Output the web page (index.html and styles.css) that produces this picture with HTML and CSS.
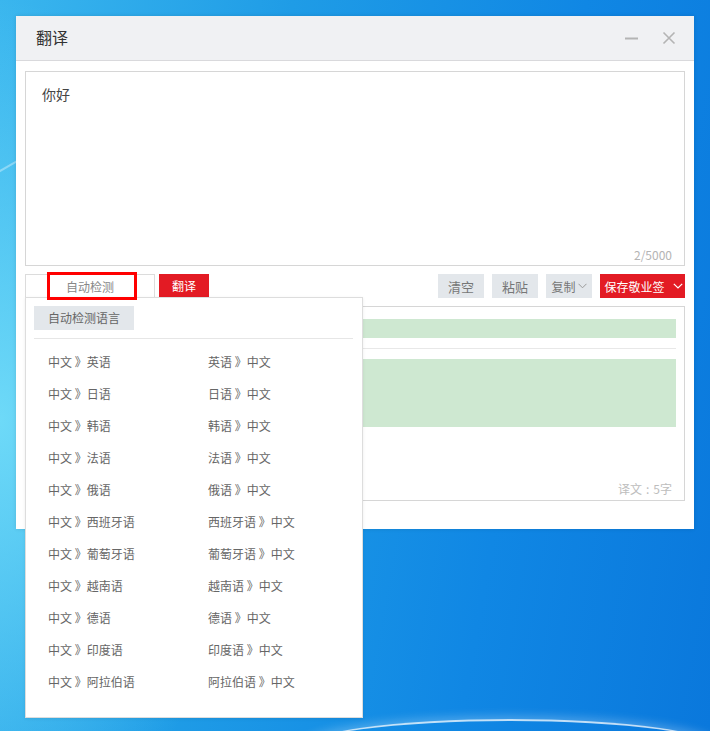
FILE: index.html
```html
<!DOCTYPE html>
<html lang="zh-CN">
<head>
<meta charset="utf-8">
<title>翻译</title>
<link rel="stylesheet" href="styles.css">
</head>
<body>
<div class="desktop">
  <div class="glow"></div>
  <div class="streak"></div>
  <div class="window">
    <div class="titlebar">
      <span class="title">翻译</span>
      <div class="controls">
        <svg class="ctl" width="14" height="14" viewBox="0 0 14 14"><path d="M1 7.5h13" stroke="#b4b4b4" stroke-width="2"/></svg>
        <svg class="ctl" width="14" height="14" viewBox="0 0 14 14"><path d="M1.5 1.5l11 11M12.5 1.5l-11 11" stroke="#b4b4b4" stroke-width="1.6"/></svg>
      </div>
    </div>
    <div class="content">
      <div class="source">
        <div class="source-text">你好</div>
        <div class="counter">2/5000</div>
      </div>
      <div class="toolbar">
        <div class="left-tools">
          <div class="lang-select">自动检测</div>
          <button class="btn btn-red btn-translate">翻译</button>
        </div>
        <div class="right-tools">
          <button class="btn btn-gray">清空</button>
          <button class="btn btn-gray">粘贴</button>
          <button class="btn btn-gray btn-copy">复制<svg width="9" height="6" viewBox="0 0 9 6"><path d="M0.5 0.8l4 4 4-4" fill="none" stroke="#999" stroke-width="1"/></svg></button>
          <button class="btn btn-red btn-save">保存敬业签<svg width="10" height="6" viewBox="0 0 10 6"><path d="M0.8 0.8l4.2 4.2 4.2-4.2" fill="none" stroke="#fff" stroke-width="1.2"/></svg></button>
        </div>
      </div>
      <div class="result">
        <div class="bar bar-short"></div>
        <div class="divider"></div>
        <div class="bar bar-tall"></div>
        <div class="result-count">译文<span class="colon">:</span>5字</div>
      </div>
    </div>
    <div class="highlight"></div>
    <div class="dropdown">
      <div class="auto-btn">自动检测语言</div>
      <div class="dd-sep"></div>
      <div class="lang-grid">
        <div class="item">中文 》英语</div><div class="item">英语 》中文</div>
        <div class="item">中文 》日语</div><div class="item">日语 》中文</div>
        <div class="item">中文 》韩语</div><div class="item">韩语 》中文</div>
        <div class="item">中文 》法语</div><div class="item">法语 》中文</div>
        <div class="item">中文 》俄语</div><div class="item">俄语 》中文</div>
        <div class="item">中文 》西班牙语</div><div class="item">西班牙语 》中文</div>
        <div class="item">中文 》葡萄牙语</div><div class="item">葡萄牙语 》中文</div>
        <div class="item">中文 》越南语</div><div class="item">越南语 》中文</div>
        <div class="item">中文 》德语</div><div class="item">德语 》中文</div>
        <div class="item">中文 》印度语</div><div class="item">印度语 》中文</div>
        <div class="item">中文 》阿拉伯语</div><div class="item">阿拉伯语 》中文</div>
      </div>
    </div>
  </div>
</div>
</body>
</html>
```

FILE: styles.css
```css
* { box-sizing: border-box; }
html, body { margin: 0; padding: 0; }
body {
  font-family: "Microsoft YaHei", "Noto Sans CJK SC", "Noto Sans", sans-serif;
  font-size: 12px;
  color: #666;
}
.desktop {
  position: relative;
  width: 710px;
  height: 731px;
  overflow: hidden;
  padding: 16px 0 0 16px;
  background:
    radial-gradient(ellipse 260px 420px at 0px 420px, rgba(120, 225, 250, 0.85), rgba(120, 225, 250, 0) 100%),
    linear-gradient(100deg, #3ab6ee 0%, #1f9ce6 35%, #1087e4 70%, #0a78dc 100%);
}
.glow {
  position: absolute;
  left: 300px;
  top: 719px;
  width: 420px;
  height: 60px;
  border-radius: 50%;
  border-top: 2px solid rgba(255, 255, 255, 0.75);
  box-shadow: 0 -3px 10px rgba(255, 255, 255, 0.25);
}
.streak {
  position: absolute;
  left: -40px;
  top: 170px;
  width: 80px;
  height: 2px;
  background: rgba(255, 255, 255, 0.35);
  transform: rotate(-30deg);
}
.window {
  position: relative;
  width: 678px;
  height: 513px;
  background: #fff;
  box-shadow: 0 0 4px rgba(0, 0, 0, 0.12);
}
.titlebar {
  height: 45px;
  background: #f0f1f3;
  border-bottom: 1px solid #d9d9dc;
  display: flex;
  align-items: center;
  justify-content: space-between;
  padding: 0 18px 0 20px;
}
.title {
  font-size: 16px;
  color: #333;
  padding-bottom: 2px;
}
.controls {
  display: flex;
  gap: 24px;
  align-items: center;
}
.ctl { display: block; }
.content {
  padding: 10px 9px 0 9px;
}
.source {
  height: 195px;
  border: 1px solid #d6d6d6;
  display: flex;
  flex-direction: column;
  padding: 12px 12px 2px 16px;
}
.source-text {
  font-size: 14px;
  line-height: 20px;
  color: #444;
}
.counter {
  margin-top: auto;
  text-align: right;
  line-height: 16px;
  color: #b4b4b4;
  font-size: 12px;
}
.toolbar {
  margin-top: 8px;
  height: 24px;
  display: flex;
  justify-content: space-between;
}
.left-tools, .right-tools {
  display: flex;
  height: 24px;
}
.right-tools { gap: 8px; }
.lang-select {
  width: 130px;
  height: 24px;
  border: 1px solid #dcdcdc;
  border-bottom: none;
  text-align: center;
  line-height: 23px;
  color: #888;
}
.btn {
  border: none;
  margin: 0;
  height: 24px;
  padding: 0;
  font-family: inherit;
  font-size: 12px;
  display: flex;
  align-items: center;
  justify-content: center;
  gap: 3px;
}
.btn-red { background: #e31b24; color: #fff; }
.btn-gray { background: #e3e7eb; color: #777; width: 46px; font-size: 13px; }
.btn-translate { width: 50px; height: 23px; margin-left: 4px; }
.btn-copy { font-size: 12px; gap: 2px; }
.btn-save { width: 85px; gap: 8px; font-size: 12px; padding-left: 2px; }
.result {
  margin-top: 8px;
  height: 195px;
  border: 1px solid #d6d6d6;
  padding: 12px 8px 0 8px;
  display: flex;
  flex-direction: column;
}
.bar { background: #cee8d1; }
.bar-short { height: 19px; }
.divider {
  height: 1px;
  background: #e8e8e8;
  margin: 10px 0;
}
.bar-tall { height: 68px; }
.result-count {
  margin-top: auto;
  text-align: right;
  padding: 0 4px 3px 0;
  line-height: 16px;
  color: #bdbdbd;
}
.colon {
  padding: 0 4px;
}
.highlight {
  position: absolute;
  left: 31px;
  top: 256px;
  width: 90px;
  height: 28px;
  border: 3px solid #f00;
  pointer-events: none;
  z-index: 3;
}
.dropdown {
  position: absolute;
  left: 9px;
  top: 281px;
  width: 338px;
  height: 421px;
  background: #fff;
  border: 1px solid #dddddd;
  box-shadow: 0 1px 3px rgba(0, 0, 0, 0.08);
  padding: 8px 9px 0 8px;
  z-index: 2;
}
.auto-btn {
  width: 100px;
  height: 24px;
  background: #e3e7eb;
  color: #666;
  text-align: center;
  line-height: 24px;
  font-size: 12px;
}
.dd-sep {
  height: 1px;
  background: #e6e6e6;
  margin-top: 8px;
}
.lang-grid {
  display: grid;
  grid-template-columns: 160px 160px;
  grid-auto-rows: 32px;
  margin-top: 7px;
  padding-left: 14px;
}
.item {
  line-height: 32px;
  color: #666;
  font-size: 12px;
  white-space: nowrap;
}
```
